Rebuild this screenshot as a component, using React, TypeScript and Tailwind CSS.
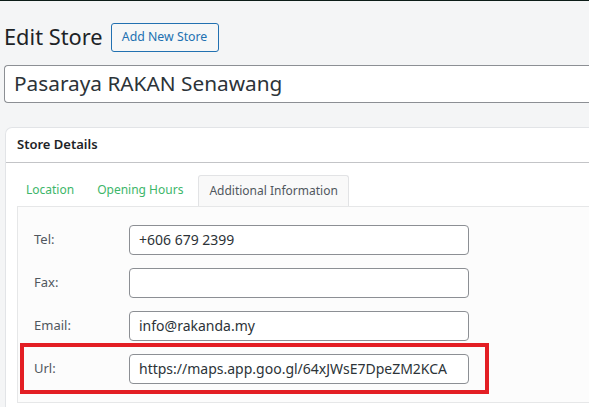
const FONT = { fontFamily: '"Noto Sans", "Open Sans", sans-serif' }

const fields = [
  { label: 'Tel:', value: '+606 679 2399' },
  { label: 'Fax:', value: '' },
  { label: 'Email:', value: 'info@rakanda.my' },
]

function Field({ label, value }: { label: string; value: string }) {
  return (
    <>
      <div className="w-[95px] shrink-0 text-[13px] text-[#50575e]">{label}</div>
      <div className="w-[340px] h-[30px] shrink-0 border border-[#8c8f94] rounded-[4px] bg-white flex items-center px-[9px] text-[14px] text-[#2c3338]">
        {value}
      </div>
    </>
  )
}

export default function App() {
  return (
    <div
      style={FONT}
      className="w-[589px] h-[407px] overflow-hidden bg-[#f4f5f6] border-t border-[#0c1c18]"
    >
      {/* Heading */}
      <div className="flex items-center pl-[4px] pt-[21px] gap-[8px]">
        <h1 className="text-[21.8px] leading-[30px] text-[#1d2327]">Edit Store</h1>
        <button className="h-[29px] w-[108px] border border-[#2271b1] rounded-[3px] bg-[#f6f7f7] text-[12.3px] text-[#2271b1]">
          Add New Store
        </button>
      </div>

      {/* Title */}
      <div className="ml-[4px] mt-[13px] h-[38px] border border-[#8c8f94] rounded-[4px] bg-white flex items-center pl-[9px] text-[20.8px] text-[#2c3338] border-r-0 rounded-r-none">
        Pasaraya RAKAN Senawang
      </div>

      {/* Card */}
      <div className="ml-[5px] mt-[24px] bg-white border border-[#e2e4e7] border-r-0 rounded-tl-[7px] h-[300px]">
        <div className="h-[35px] flex items-center pl-[11px] text-[13px] font-semibold text-[#1d2327] border-b border-[#c3c4c7]">
          Store Details
        </div>

        <div className="pl-[11px] pt-[12px]">
          {/* Tabs */}
          <div className="flex items-end h-[31px] text-[12px]">
            <span className="pl-[9px] pr-[23px] pb-[7px] text-[#3db66a]">Location</span>
            <span className="pr-[15px] pb-[7px] text-[#3db66a]">Opening Hours</span>
            <span className="h-[31px] px-[10px] flex items-center border border-b-0 border-[#e2e3e5] rounded-t-[3px] bg-[#f9f9f9] text-[#50575e]">
              Additional Information
            </span>
          </div>

          {/* Panel */}
          <div className="border border-[#e6e7e8] border-r-0 bg-[#fcfcfc] pt-[11px] pb-[8px]">
            {fields.map(f => (
              <div key={f.label} className="flex items-center h-[43px] ml-[2px] pl-[14px] w-[469px]">
                <Field label={f.label} value={f.value} />
              </div>
            ))}
            <div className="flex items-center h-[51px] -mt-[4px] ml-[2px] pl-[10px] w-[469px] border-4 border-[#e31e24]">
              <Field label="Url:" value="https://maps.app.goo.gl/64xJWsE7DpeZM2KCA" />
            </div>
          </div>
        </div>
      </div>
    </div>
  )
}
